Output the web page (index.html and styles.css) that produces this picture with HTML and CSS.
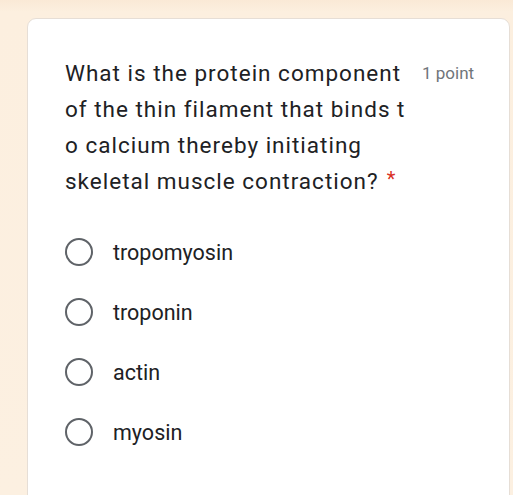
FILE: index.html
```html
<!DOCTYPE html>
<html>
<head>
<meta charset="utf-8">
<link rel="stylesheet" href="styles.css">
</head>
<body>
<div class="page">
  <div class="card">
    <div class="header">
      <div class="question">What is the protein component<br>of the thin filament that binds t<br>o calcium thereby initiating<br>skeletal muscle contraction?<span class="req">*</span></div>
      <div class="points">1 point</div>
    </div>
    <div class="options">
      <div class="option"><span class="radio"></span><span class="label">tropomyosin</span></div>
      <div class="option"><span class="radio"></span><span class="label">troponin</span></div>
      <div class="option"><span class="radio"></span><span class="label">actin</span></div>
      <div class="option"><span class="radio"></span><span class="label">myosin</span></div>
    </div>
  </div>
</div>
</body>
</html>
```

FILE: styles.css
```css
html, body {
  margin: 0;
  padding: 0;
  background: #fcf0e0;
}
.page {
  width: 513px;
  height: 495px;
  overflow: hidden;
  padding: 18px 0 0 27px;
  box-sizing: border-box;
  background: linear-gradient(#fae9d6 0, #fcefdf 12px, #fcf0e1 100%);
}
.card {
  width: 483px;
  height: 490px;
  background: #ffffff;
  border: 1px solid #e6ded6;
  border-radius: 9px;
  box-sizing: border-box;
  padding: 36px 0 0 37px;
  font-family: Roboto, "Liberation Sans", sans-serif;
}
.header {
  display: flex;
  align-items: flex-start;
}
.question {
  width: 357px;
  font-size: 22.5px;
  letter-spacing: 1px;
  line-height: 36px;
  color: #202124;
  font-variant-ligatures: none;
  white-space: nowrap;
}
.req {
  color: #d93025;
  font-size: 20px;
  letter-spacing: 0;
  margin-left: 8px;
  line-height: 0;
  vertical-align: 3px;
}
.points {
  font-size: 17px;
  line-height: 36px;
  color: #70757a;
}
.options {
  margin-top: 23px;
  display: flex;
  flex-direction: column;
}
.option {
  height: 60px;
  display: flex;
  align-items: center;
}
.radio {
  width: 28px;
  height: 28px;
  box-sizing: border-box;
  border: 2.5px solid #5f6368;
  border-radius: 50%;
  margin-right: 20px;
  flex: none;
}
.label {
  font-size: 21.5px;
  color: #202124;
}
```
